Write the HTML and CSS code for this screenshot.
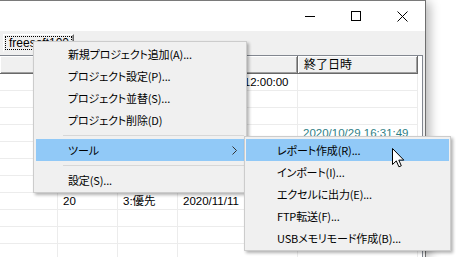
FILE: index.html
```html
<!DOCTYPE html>
<html lang="ja">
<head>
  <meta charset="UTF-8" />
  <title>プロジェクト一覧</title>
  <link rel="stylesheet" href="styles.css">
</head>
<body>
  <div class="window">
    <div class="titlebar">
      <span class="cap-btn">
        <svg width="10" height="10" viewBox="0 0 10 10"><path d="M0 5.5H10" stroke="#000" stroke-width="1"/></svg>
      </span>
      <span class="cap-btn">
        <svg width="10" height="10" viewBox="0 0 10 10"><rect x="0.5" y="0.5" width="9" height="9" fill="none" stroke="#000" stroke-width="1"/></svg>
      </span>
      <span class="cap-btn">
        <svg width="11" height="11" viewBox="0 0 11 11"><path d="M0.5 0.5L10.5 10.5M10.5 0.5L0.5 10.5" stroke="#000" stroke-width="1"/></svg>
      </span>
    </div>

    <div class="client">
      <div class="tabstrip">
        <div class="tab"><span class="tab-label">freesoft100</span></div>
      </div>

      <div class="list">
        <div class="list-head">
          <div class="hcell"></div>
          <div class="hcell"></div>
          <div class="hcell"></div>
          <div class="hcell"></div>
          <div class="hcell">終了日時</div>
        </div>
        <div class="list-body">
          <div class="row"><div class="cell"></div><div class="cell"></div><div class="cell"></div><div class="cell">2020/10/29 12:00:00</div><div class="cell"></div></div>
          <div class="row"><div class="cell"></div><div class="cell"></div><div class="cell"></div><div class="cell"></div><div class="cell"></div></div>
          <div class="row"><div class="cell"></div><div class="cell"></div><div class="cell"></div><div class="cell"></div><div class="cell"></div></div>
          <div class="row"><div class="cell"></div><div class="cell"></div><div class="cell"></div><div class="cell"></div><div class="cell done">2020/10/29 16:31:49</div></div>
          <div class="row"><div class="cell"></div><div class="cell"></div><div class="cell"></div><div class="cell"></div><div class="cell"></div></div>
          <div class="row"><div class="cell"></div><div class="cell"></div><div class="cell"></div><div class="cell"></div><div class="cell"></div></div>
          <div class="row"><div class="cell"></div><div class="cell"></div><div class="cell"></div><div class="cell"></div><div class="cell"></div></div>
          <div class="row"><div class="cell"></div><div class="cell">20</div><div class="cell">3:優先</div><div class="cell">2020/11/11</div><div class="cell"></div></div>
          <div class="row"><div class="cell"></div><div class="cell"></div><div class="cell"></div><div class="cell"></div><div class="cell"></div></div>
          <div class="row"><div class="cell"></div><div class="cell"></div><div class="cell"></div><div class="cell"></div><div class="cell"></div></div>
          <div class="row"><div class="cell"></div><div class="cell"></div><div class="cell"></div><div class="cell"></div><div class="cell"></div></div>
        </div>
      </div>
    </div>
  </div>

  <div class="menu main-menu">
    <div class="menu-item">新規プロジェクト追加(A)...</div>
    <div class="menu-item">プロジェクト設定(P)...</div>
    <div class="menu-item">プロジェクト並替(S)...</div>
    <div class="menu-item">プロジェクト削除(D)</div>
    <div class="menu-sep"></div>
    <div class="menu-item active">ツール
      <svg class="arrow" width="5" height="9" viewBox="0 0 5 9"><path d="M0.5 0.5L4.5 4.5L0.5 8.5" fill="none" stroke="#333" stroke-width="1"/></svg>
    </div>
    <div class="menu-sep"></div>
    <div class="menu-item">設定(S)...</div>
  </div>

  <div class="menu sub-menu">
    <div class="menu-item active">レポート作成(R)...</div>
    <div class="menu-item">インポート(I)...</div>
    <div class="menu-item">エクセルに出力(E)...</div>
    <div class="menu-item">FTP転送(F)...</div>
    <div class="menu-item">USBメモリモード作成(B)...</div>
  </div>

  <svg class="cursor" width="13" height="20" viewBox="0 0 13 20">
    <path d="M0.5 0.5V16.5L4.3 12.9L6.9 18.8L9.3 17.8L6.8 12.1H11.8Z" fill="#fff" stroke="#000" stroke-width="1" stroke-linejoin="miter"/>
  </svg>
</body>
</html>
```

FILE: styles.css
```css
* {
  box-sizing: border-box;
}
body {
  margin: 0;
  background: #fff;
  font-family: "Noto Sans CJK JP", "Noto Sans", sans-serif;
  color: #000;
  overflow: hidden;
}
.window {
  width: 426px;
  height: 257px;
  background: #f0f0f0;
  border-top: 1px solid #7a7a7a;
  border-right: 1px solid #6e6e6e;
  box-shadow: 4px 2px 10px rgba(0,0,0,0.28);
  overflow: hidden;
}
.titlebar {
  height: 30px;
  background: #fff;
  display: flex;
  justify-content: flex-end;
}
.cap-btn {
  width: 46px;
  height: 30px;
  display: flex;
  align-items: center;
  justify-content: center;
}
.client {
  padding-right: 2px;
}
.tabstrip {
  height: 24px;
  padding: 3px 0 0 3px;
}
.tab {
  width: 71px;
  height: 18px;
  padding: 1px;
  border: 1px solid;
  border-color: #fff #696969 #f0f0f0 #fff;
  box-shadow: inset -1px 0 #a0a0a0;
}
.tab-label {
  display: block;
  height: 14px;
  padding-left: 3px;
  border: 1px dotted #000;
  font-family: "Liberation Sans", "Noto Sans CJK JP", sans-serif;
  font-size: 12px;
  line-height: 12px;
  white-space: nowrap;
  overflow: hidden;
}
.list {
  background: #fff;
  border-top: 1px solid #828790;
  border-right: 1px solid #828790;
  height: 210px;
}
.list-head, .row {
  display: grid;
  grid-template-columns: 58px 60px 60px 120px 120px;
}
.hcell {
  height: 18px;
  background: #f0f0f0;
  border-right: 1px solid #696969;
  border-bottom: 1px solid #696969;
  box-shadow: inset 1px 1px #fff, inset -1px -1px #a0a0a0;
  font-size: 12px;
  line-height: 16px;
  padding-left: 6px;
  white-space: nowrap;
  overflow: hidden;
}
.cell {
  height: 17px;
  border-right: 1px solid #ececec;
  border-bottom: 1px solid #ececec;
  font-family: "Liberation Sans", "Noto Sans CJK JP", sans-serif;
  font-size: 11.5px;
  line-height: 16px;
  padding-left: 5px;
  white-space: nowrap;
  overflow: hidden;
}
.cell.done {
  color: #2f7f86;
}
.menu {
  position: absolute;
  background: #f0f0f0;
  border: 1px solid #ccc;
  box-shadow: 2px 2px 3px rgba(0,0,0,0.3);
  font-size: 11px;
  letter-spacing: -0.15px;
  font-feature-settings: "palt";
}
.main-menu {
  left: 33px;
  top: 41px;
  width: 214px;
  padding: 1px 2px;
}
.sub-menu {
  left: 244px;
  top: 136px;
  width: 207px;
  padding: 2px 1px 1px;
}
.menu-item {
  height: 22px;
  display: flex;
  align-items: center;
  padding-left: 32px;
  white-space: nowrap;
}
.sub-menu .menu-item {
  padding-left: 31px;
}
.menu-item.active {
  background: #91c9f7;
}
.menu-item .arrow {
  margin-left: auto;
  margin-right: 7px;
}
.menu-sep {
  height: 8px;
  padding-top: 4px;
}
.menu-sep::before {
  content: "";
  display: block;
  margin-left: 27px;
  border-top: 1px solid #d7d7d7;
}
.cursor {
  position: absolute;
  left: 392px;
  top: 148px;
}
```
